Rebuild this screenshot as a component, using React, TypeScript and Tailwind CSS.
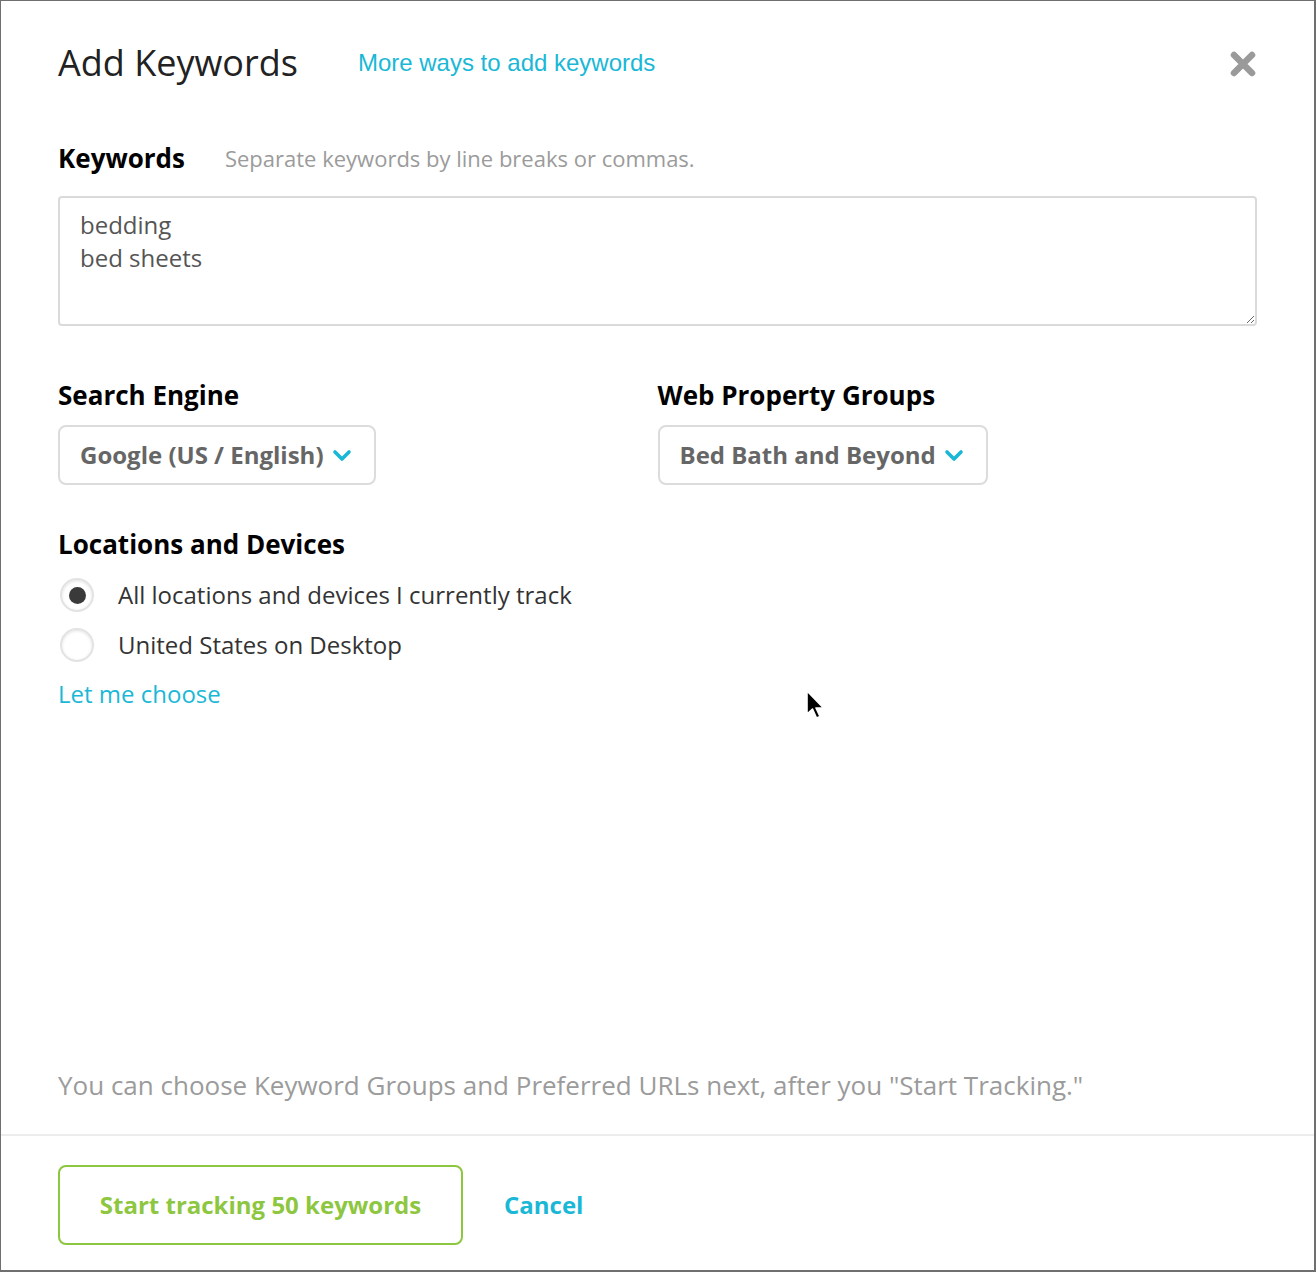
import React from "react";

const sans = "font-['Open_Sans',sans-serif]";

function Chevron() {
  return (
    <svg width="20" height="14" viewBox="0 0 20 14" className="ml-2 mt-[2px]">
      <polyline
        points="3,3 10,10 17,3"
        fill="none"
        stroke="#1ab8d6"
        strokeWidth="3.6"
        strokeLinecap="round"
        strokeLinejoin="round"
      />
    </svg>
  );
}

function Dropdown({ label }: { label: string }) {
  return (
    <button
      type="button"
      className="flex h-[60px] items-center rounded-[8px] border-2 border-[#dcdcdc] bg-white pl-[20px] pr-[22px] text-[24px] font-bold text-[#666]"
    >
      {label}
      <Chevron />
    </button>
  );
}

function Radio({ checked, label }: { checked?: boolean; label: string }) {
  return (
    <label className="flex h-[40px] items-center">
      <span className="ml-[2px] flex h-[34px] w-[34px] items-center justify-center rounded-full border-2 border-[#e3e3e3] bg-white shadow-[inset_0_1px_3px_rgba(0,0,0,0.12)]">
        {checked && <span className="h-[17px] w-[17px] rounded-full bg-[#3a3a3a]" />}
      </span>
      <span className="ml-[24px] text-[24px] text-[#333]">{label}</span>
    </label>
  );
}

export default function App() {
  return (
    <div
      className={`relative flex h-[1272px] w-[1316px] flex-col border-t border-l border-r-2 border-b-2 border-[#6f6f6f] bg-white ${sans}`}
    >
      <div className="flex flex-1 flex-col px-[57px]">
        <div className="flex items-center pt-[40px]">
          <h1 className="text-[36px] leading-[44px] font-normal text-[#222]">Add Keywords</h1>
          <a className="ml-[60px] mt-[-1px] font-['Liberation_Sans',Arial,sans-serif] text-[24px] text-[#1ab8d6]">
            More ways to add keywords
          </a>
          <button type="button" className="ml-auto mr-[1px] mt-[2px]">
            <svg width="26" height="26" viewBox="0 0 26 26">
              <path
                d="M4 4 L22 22 M22 4 L4 22"
                stroke="#9a9a9a"
                strokeWidth="6.5"
                strokeLinecap="round"
              />
            </svg>
          </button>
        </div>

        <div className="mt-[57px] flex items-center leading-[32px]">
          <span className="text-[26px] font-bold text-black">Keywords</span>
          <span className="ml-[40px] text-[22px] text-[#9b9b9b]">
            Separate keywords by line breaks or commas.
          </span>
        </div>

        <textarea
          className="mt-[22px] h-[130px] w-full resize rounded-[4px] border-2 border-[#dadada] px-[20px] py-[10px] text-[24px] leading-[33px] text-[#555] outline-none"
          defaultValue={"bedding\nbed sheets"}
        />

        <div className="mt-[53px] grid grid-cols-2">
          <div>
            <div className="text-[26px] leading-[32px] font-bold text-black">Search Engine</div>
            <div className="mt-[14px] flex">
              <Dropdown label="Google (US / English)" />
            </div>
          </div>
          <div>
            <div className="text-[26px] leading-[32px] font-bold text-black">Web Property Groups</div>
            <div className="mt-[14px] flex">
              <Dropdown label="Bed Bath and Beyond" />
            </div>
          </div>
        </div>

        <div className="mt-[43px] text-[26px] leading-[32px] font-bold text-black">
          Locations and Devices
        </div>
        <div className="mt-[15px] flex flex-col gap-[10px]">
          <Radio checked label="All locations and devices I currently track" />
          <Radio label="United States on Desktop" />
        </div>
        <a className="mt-[13px] text-[24px] leading-[32px] text-[#1ab8d6]">Let me choose</a>

        <div className="flex-1" />
        <p className="text-[26px] leading-[34px] text-[#9b9b9b]">
          You can choose Keyword Groups and Preferred URLs next, after you "Start Tracking."
        </p>
      </div>

      <div className="mt-[32px] h-[2px] bg-[#ececec]" />

      <div className="flex items-center px-[57px] pt-[29px] pb-[25px]">
        <button
          type="button"
          className="h-[80px] w-[405px] rounded-[8px] border-2 border-[#8dc63f] text-[24px] font-bold text-[#8dc63f]"
        >
          Start tracking 50 keywords
        </button>
        <a className="ml-[41px] text-[24px] font-bold text-[#1ab8d6]">Cancel</a>
      </div>

      <svg
        className="absolute left-[804px] top-[689px]"
        width="22"
        height="32"
        viewBox="0 0 22 32"
      >
        <path
          d="M2 1 L2 24 L7.5 19 L11.5 28 L15 26.5 L11 18 L18.5 18 Z"
          fill="#000"
          stroke="#fff"
          strokeWidth="1.6"
          strokeLinejoin="round"
        />
      </svg>
    </div>
  );
}
